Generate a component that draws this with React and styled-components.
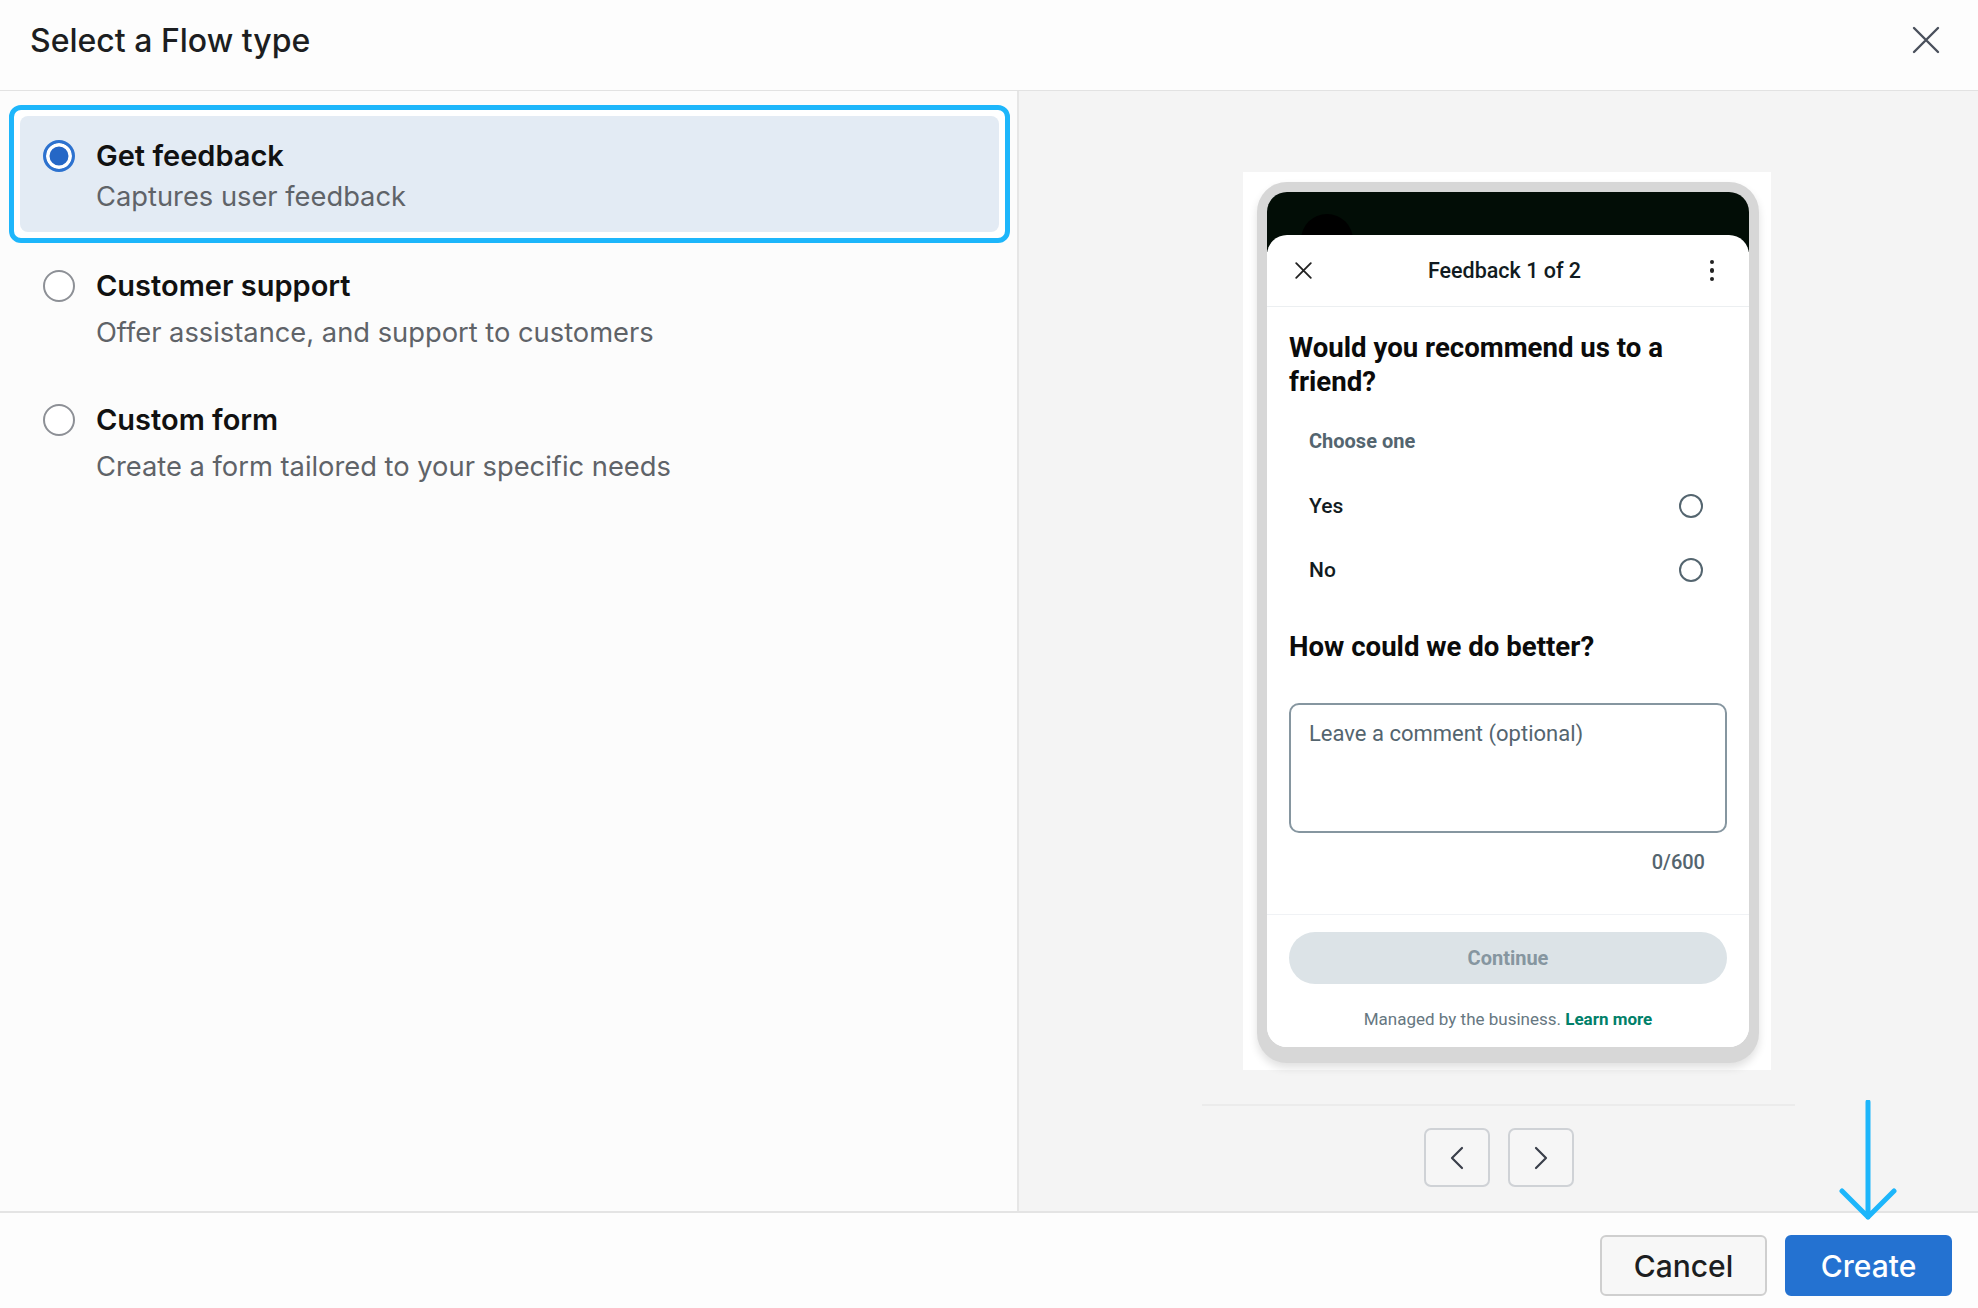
import React from 'react';
import styled, { createGlobalStyle } from 'styled-components';

const GlobalStyle = createGlobalStyle`
  html, body { margin: 0; padding: 0; }
  body {
    font-family: Inter, "Liberation Sans", sans-serif;
    background: #fdfdfd;
    color: #1c1e21;
  }
  * { box-sizing: border-box; }
`;

const Dialog = styled.div`
  width: 1978px;
  height: 1308px;
  display: flex;
  flex-direction: column;
  position: relative;
  overflow: hidden;
  background: #fdfdfd;
`;

const Header = styled.header`
  height: 91px;
  flex: none;
  display: flex;
  align-items: center;
  justify-content: space-between;
  padding: 0 38px 10px 30px;
  border-bottom: 1px solid #e2e2e2;
`;

const Title = styled.h1`
  margin: 0;
  font-size: 32px;
  font-weight: 500;
  color: #1c1e21;
`;

const IconButton = styled.button`
  border: 0;
  background: none;
  padding: 0;
  display: flex;
  cursor: pointer;
`;

const Body = styled.div`
  flex: 1;
  display: flex;
  min-height: 0;
`;

const LeftPane = styled.div`
  width: 1019px;
  flex: none;
  background: #fcfcfc;
  border-right: 2px solid #e6e6e6;
  padding: 14px 7px 0 9px;
`;

const Option = styled.label`
  display: block;
  border: 5px solid ${p => (p.$selected ? '#1db6fb' : 'transparent')};
  background: ${p => (p.$selected ? '#fff' : 'transparent')};
  border-radius: 12px;
  padding: 6px;
  cursor: pointer;
`;

const OptionInner = styled.div`
  display: grid;
  grid-template-columns: 32px 1fr;
  column-gap: 21px;
  padding: ${p => (p.$selected ? '22px 20px 17px 23px' : '14px 20px 15px 23px')};
  border-radius: 8px;
  background: ${p => (p.$selected ? '#e3ebf4' : 'transparent')};
`;

const Radio = styled.span`
  width: 32px;
  height: 32px;
  margin-top: 2px;
  border-radius: 50%;
  border: ${p => (p.$checked ? '3.5px solid #2d72cf' : '2px solid #8d9096')};
  background: ${p => (p.$checked ? '#2567c6' : '#fff')};
  box-shadow: ${p => (p.$checked ? 'inset 0 0 0 3.5px #fff' : 'none')};
`;

const OptionTitle = styled.div`
  font-size: 29px;
  font-weight: 600;
  line-height: 36px;
  color: #111;
`;

const OptionSub = styled.div`
  grid-column: 2;
  margin-top: ${p => (p.$selected ? '5px' : '11px')};
  font-size: 27.3px;
  line-height: 36px;
  color: #5f6368;
`;

const RightPane = styled.div`
  flex: 1;
  background: #f4f4f4;
  display: flex;
  flex-direction: column;
  align-items: center;
  padding-top: 81px;
`;

const PreviewCard = styled.div`
  width: 528px;
  height: 898px;
  margin-left: 17px;
  background: #fff;
  padding: 10px 12px 7px 14px;
  display: flex;
`;

const Phone = styled.div`
  flex: 1;
  display: flex;
  background: #d7d7d7;
  padding: 10px 10px 16px;
  border-radius: 30px;
  box-shadow: 0 5px 8px rgba(0, 0, 0, 0.12);
`;

const Screen = styled.div`
  flex: 1;
  position: relative;
  display: flex;
  flex-direction: column;
  border-radius: 20px;
  overflow: hidden;
  background: linear-gradient(#020d06 0 60px, #fff 60px);
  font-family: Roboto, "Liberation Sans", sans-serif;
`;

const Avatar = styled.span`
  position: absolute;
  left: 34px;
  top: 22px;
  width: 52px;
  height: 52px;
  border-radius: 50%;
  background: #000;
`;

const Sheet = styled.div`
  position: relative;
  flex: 1;
  margin-top: 43px;
  background: #fff;
  border-radius: 20px 20px 0 0;
  display: flex;
  flex-direction: column;
`;

const SheetHeader = styled.div`
  height: 72px;
  flex: none;
  display: grid;
  grid-template-columns: 1fr auto 1fr;
  align-items: center;
  padding: 0 35px 0 28px;
  border-bottom: 1px solid #eceff1;
`;

const SheetTitle = styled.div`
  font-size: 21.5px;
  font-weight: 500;
  color: #111b21;
`;

const Kebab = styled.div`
  justify-self: end;
  display: flex;
  flex-direction: column;
  gap: 4px;
  span {
    width: 4.5px;
    height: 4.5px;
    border-radius: 50%;
    background: #222;
  }
`;

const SheetBody = styled.div`
  flex: 1;
  padding: 0 22px;
`;

const Question = styled.h2`
  margin: ${p => p.$top || '24px'} 0 0;
  font-size: 27.6px;
  line-height: 34px;
  font-weight: 700;
  color: #0b0b0b;
`;

const Hint = styled.div`
  margin-top: 30px;
  padding-left: 20px;
  font-size: 20px;
  line-height: 24px;
  font-weight: 700;
  color: #54656f;
`;

const ChoiceList = styled.div`
  margin-top: 21px;
`;

const Choice = styled.div`
  height: 64px;
  display: flex;
  align-items: center;
  justify-content: space-between;
  padding: 0 24px 0 20px;
  font-size: 21px;
  font-weight: 500;
  color: #111b21;
`;

const SmallRadio = styled.span`
  width: 24px;
  height: 24px;
  border-radius: 50%;
  border: 2.5px solid #54656f;
`;

const Comment = styled.div`
  margin-top: 39px;
  height: 130px;
  border: 2px solid #8696a0;
  border-radius: 10px;
  padding: 16px 18px;
  font-size: 22px;
  line-height: 26px;
  color: #54656f;
`;

const Counter = styled.div`
  margin-top: 17px;
  padding-right: 22px;
  text-align: right;
  font-size: 20px;
  line-height: 24px;
  font-weight: 500;
  color: #54656f;
`;

const SheetFooter = styled.div`
  border-top: 1px solid #f0f2f5;
  padding: 17px 22px 18px;
  display: flex;
  flex-direction: column;
  align-items: center;
`;

const ContinueButton = styled.div`
  width: 100%;
  height: 52px;
  border-radius: 26px;
  background: #dce3e7;
  color: #8696a0;
  font-size: 20px;
  font-weight: 700;
  display: flex;
  align-items: center;
  justify-content: center;
`;

const Managed = styled.div`
  margin-top: 25px;
  font-size: 17px;
  line-height: 20px;
  color: #667781;
  b { color: #008069; font-weight: 700; }
`;

const Divider = styled.div`
  width: 593px;
  height: 2px;
  margin-top: 34px;
  background: #ebebeb;
`;

const NavRow = styled.div`
  margin-top: 22px;
  display: flex;
  gap: 18px;
`;

const NavButton = styled.button`
  width: 66px;
  height: 59px;
  border: 2px solid #cfd2d6;
  border-radius: 7px;
  background: #f6f6f6;
  display: flex;
  align-items: center;
  justify-content: center;
  padding: 0;
`;

const Footer = styled.footer`
  height: 97px;
  flex: none;
  display: flex;
  justify-content: flex-end;
  align-items: flex-start;
  gap: 18px;
  padding: 22px 26px 0;
  border-top: 2px solid #e4e4e4;
  background: #fdfdfd;
`;

const FooterButton = styled.button`
  width: 167px;
  height: 61px;
  border-radius: 6px;
  font-family: Inter, "Liberation Sans", sans-serif;
  font-size: 30px;
  font-weight: 500;
  border: 2px solid ${p => (p.$primary ? '#2472d1' : '#cfcfcf')};
  background: ${p => (p.$primary ? '#2472d1' : '#f7f7f7')};
  color: ${p => (p.$primary ? '#fff' : '#1c1e21')};
`;

const Pointer = styled.svg`
  position: absolute;
  left: 1838px;
  top: 1100px;
`;

const options = [
  { title: 'Get feedback', sub: 'Captures user feedback', selected: true },
  { title: 'Customer support', sub: 'Offer assistance, and support to customers' },
  { title: 'Custom form', sub: 'Create a form tailored to your specific needs' },
];

const Close = ({ size, color, width }) => (
  <svg width={size} height={size} viewBox="0 0 28 28" fill="none">
    <path d="M2 2L26 26M26 2L2 26" stroke={color} strokeWidth={width} strokeLinecap="round" />
  </svg>
);

const Chevron = ({ dir }) => (
  <svg width="14" height="24" viewBox="0 0 14 24" fill="none">
    <path
      d={dir === 'left' ? 'M12 2L2 12L12 22' : 'M2 2L12 12L2 22'}
      stroke="#3a3f4a"
      strokeWidth="2.2"
      strokeLinecap="round"
      strokeLinejoin="round"
    />
  </svg>
);

export default function App() {
  return (
    <Dialog>
      <GlobalStyle />
      <Header>
        <Title>Select a Flow type</Title>
        <IconButton aria-label="Close">
          <Close size={28} color="#4a505c" width={2.4} />
        </IconButton>
      </Header>

      <Body>
        <LeftPane>
          {options.map(o => (
            <Option key={o.title} $selected={o.selected}>
              <OptionInner $selected={o.selected}>
                <Radio $checked={o.selected} />
                <OptionTitle>{o.title}</OptionTitle>
                <OptionSub $selected={o.selected}>{o.sub}</OptionSub>
              </OptionInner>
            </Option>
          ))}
        </LeftPane>

        <RightPane>
          <PreviewCard>
            <Phone>
              <Screen>
                <Avatar />
                <Sheet>
                  <SheetHeader>
                    <Close size={17} color="#222" width={3} />
                    <SheetTitle>Feedback 1 of 2</SheetTitle>
                    <Kebab>
                      <span />
                      <span />
                      <span />
                    </Kebab>
                  </SheetHeader>
                  <SheetBody>
                    <Question>Would you recommend us to a friend?</Question>
                    <Hint>Choose one</Hint>
                    <ChoiceList>
                      <Choice>
                        Yes
                        <SmallRadio />
                      </Choice>
                      <Choice>
                        No
                        <SmallRadio />
                      </Choice>
                    </ChoiceList>
                    <Question $top="28px">How could we do better?</Question>
                    <Comment>Leave a comment (optional)</Comment>
                    <Counter>0/600</Counter>
                  </SheetBody>
                  <SheetFooter>
                    <ContinueButton>Continue</ContinueButton>
                    <Managed>
                      Managed by the business. <b>Learn more</b>
                    </Managed>
                  </SheetFooter>
                </Sheet>
              </Screen>
            </Phone>
          </PreviewCard>
          <Divider />
          <NavRow>
            <NavButton aria-label="Previous">
              <Chevron dir="left" />
            </NavButton>
            <NavButton aria-label="Next">
              <Chevron dir="right" />
            </NavButton>
          </NavRow>
        </RightPane>
      </Body>

      <Footer>
        <FooterButton>Cancel</FooterButton>
        <FooterButton $primary>Create</FooterButton>
      </Footer>

      <Pointer width="60" height="122" viewBox="0 0 60 122" fill="none">
        <path d="M30 2V117M4 91L30 117L56 91" stroke="#1db6fb" strokeWidth="5" strokeLinecap="round" strokeLinejoin="round" />
      </Pointer>
    </Dialog>
  );
}
